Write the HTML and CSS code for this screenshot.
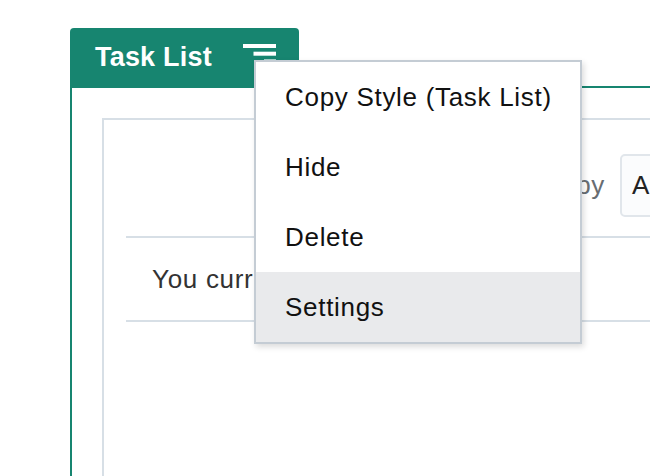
FILE: index.html
```html
<!DOCTYPE html>
<html>
<head>
<meta charset="utf-8">
<link rel="stylesheet" href="styles.css">
</head>
<body>
<div class="panel">
  <div class="panel-head">
    <div class="tab">
      <span class="tab-title">Task List</span>
      <svg class="tab-icon" width="33" height="20" viewBox="0 0 33 20">
        <rect x="0" y="0" width="33" height="4" fill="#fff"/>
        <rect x="10.5" y="7.7" width="22.5" height="4" fill="#fff"/>
        <rect x="21" y="15.4" width="12" height="4" fill="#fff"/>
      </svg>
    </div>
    <div class="head-rule"></div>
  </div>
  <div class="panel-body">
    <div class="box">
      <div class="toolbar">
        <span class="sort-label">Sort by</span>
        <div class="select">All tasks</div>
      </div>
      <div class="empty">You currently have no tasks.</div>
    </div>
  </div>
</div>
<div class="menu">
  <div class="menu-item">Copy Style (Task List)</div>
  <div class="menu-item">Hide</div>
  <div class="menu-item">Delete</div>
  <div class="menu-item active">Settings</div>
</div>
</body>
</html>
```
FILE: styles.css
```css
html, body {
  margin: 0;
  padding: 0;
  background: #ffffff;
  overflow: hidden;
  width: 650px;
  height: 476px;
}
body {
  font-family: "Liberation Sans", Arial, sans-serif;
  color: #222;
  position: relative;
}
.panel {
  margin-left: 70px;
  padding-top: 28px;
  width: 900px;
}
.panel-head {
  display: flex;
  height: 60px;
}
.tab {
  width: 229px;
  height: 60px;
  background: #178570;
  border-radius: 4px 4px 0 0;
  display: flex;
  align-items: flex-start;
  justify-content: space-between;
  padding: 0 23px 0 25px;
  box-sizing: border-box;
  flex: none;
}
.tab-title {
  color: #fff;
  font-weight: bold;
  font-size: 27px;
  letter-spacing: 0.2px;
  line-height: 27px;
  margin-top: 16px;
}
.tab-icon {
  margin-top: 16px;
}
.head-rule {
  flex: 1;
  border-bottom: 2px solid #178570;
}
.panel-body {
  border-left: 2px solid #178570;
  padding: 30px 0 0 30px;
  height: 400px;
}
.box {
  border-left: 2px solid #d7dfe6;
  border-top: 2px solid #d7dfe6;
  padding-left: 22px;
  height: 400px;
}
.toolbar {
  width: 694px;
  display: flex;
  justify-content: flex-end;
  align-items: center;
  gap: 15px;
  padding: 34px 0 19px;
  border-bottom: 2px solid #d7dfe6;
}
.sort-label {
  font-size: 26px;
  letter-spacing: 0.7px;
  color: #686d72;
}
.select {
  width: 200px;
  height: 63px;
  box-sizing: border-box;
  border: 2px solid #e1e6eb;
  border-radius: 5px;
  background: #fbfcfd;
  font-size: 26px;
  letter-spacing: 0.7px;
  line-height: 59px;
  padding-left: 10px;
  color: #222;
  overflow: hidden;
  white-space: nowrap;
}
.empty {
  height: 82px;
  line-height: 82px;
  font-size: 26px;
  letter-spacing: 0.7px;
  color: #333;
  padding-left: 26px;
  border-bottom: 2px solid #d7dfe6;
  width: 670px;
  white-space: nowrap;
}
.menu {
  position: absolute;
  left: 254px;
  top: 60px;
  width: 328px;
  box-sizing: border-box;
  border: 2px solid #c4ccd4;
  background: #fff;
  box-shadow: 2px 3px 6px rgba(0, 0, 0, 0.14);
}
.menu-item {
  height: 70px;
  line-height: 70px;
  font-size: 26px;
  letter-spacing: 0.7px;
  color: #111;
  padding-left: 29px;
}
.menu-item.active {
  background: #e9eaec;
}
```
